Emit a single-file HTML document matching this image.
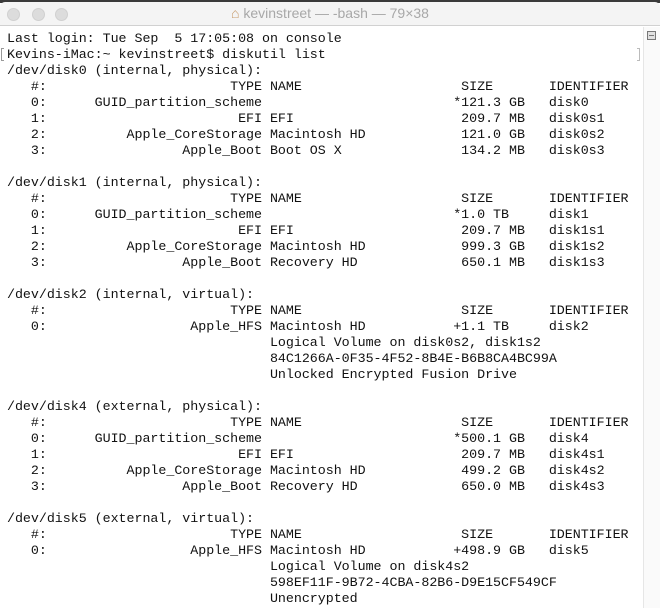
<!DOCTYPE html>
<html><head><meta charset="utf-8"><style>
html,body{margin:0;padding:0;}
body{width:660px;height:608px;overflow:hidden;background:#fff;position:relative;}
.top{position:absolute;left:0;top:0;width:660px;height:3px;background:#3a3a3a;}
.bar{position:absolute;left:0;top:2px;width:660px;height:23px;background:#f4f4f4;border-bottom:1px solid #d1d1d1;border-radius:5px 5px 0 0;}
.dot{position:absolute;top:6px;width:13px;height:13px;border-radius:50%;background:#dcdcdc;border:0.5px solid #d0d0d0;box-sizing:border-box;}
.title{position:absolute;left:0;width:660px;top:3px;text-align:center;font:14px "Liberation Sans",sans-serif;color:#a8a8a8;}
.sb{position:absolute;left:643px;top:27px;width:17px;height:581px;background:#fafafa;border-left:1px solid #e6e6e6;}
.sbi{position:absolute;left:647px;top:31px;width:9px;height:9px;border:1px solid #777;background:#e0e0e0;box-sizing:border-box;}
.sbi:before{content:"";position:absolute;left:1px;right:1px;top:3px;height:1px;background:#777;}
pre{position:absolute;left:7px;top:32px;margin:0;font:13.33px/16px "Liberation Mono",monospace;letter-spacing:-0.03px;color:#111;}
.mk{position:absolute;left:1px;top:48px;width:2px;height:11px;border:1px solid #999;border-right:none;}
.mk2{position:absolute;left:637px;top:48px;width:2px;height:11px;border:1px solid #bbb;border-left:none;}
</style></head><body>
<div class="top"></div>
<div class="bar">
<div class="dot" style="left:7px"></div>
<div class="dot" style="left:32px"></div>
<div class="dot" style="left:55px"></div>
<div class="title"><span style="color:#c79b6b">&#x2302;</span> kevinstreet — -bash — 79×38</div>
</div>
<div class="sb"></div><div class="sbi"></div>
<div class="mk"></div><div class="mk2"></div>
<pre>Last login: Tue Sep  5 17:05:08 on console
Kevins-iMac:~ kevinstreet$ diskutil list
/dev/disk0 (internal, physical):
   #:                       TYPE NAME                    SIZE       IDENTIFIER
   0:      GUID_partition_scheme                        *121.3 GB   disk0
   1:                        EFI EFI                     209.7 MB   disk0s1
   2:          Apple_CoreStorage Macintosh HD            121.0 GB   disk0s2
   3:                 Apple_Boot Boot OS X               134.2 MB   disk0s3

/dev/disk1 (internal, physical):
   #:                       TYPE NAME                    SIZE       IDENTIFIER
   0:      GUID_partition_scheme                        *1.0 TB     disk1
   1:                        EFI EFI                     209.7 MB   disk1s1
   2:          Apple_CoreStorage Macintosh HD            999.3 GB   disk1s2
   3:                 Apple_Boot Recovery HD             650.1 MB   disk1s3

/dev/disk2 (internal, virtual):
   #:                       TYPE NAME                    SIZE       IDENTIFIER
   0:                  Apple_HFS Macintosh HD           +1.1 TB     disk2
                                 Logical Volume on disk0s2, disk1s2
                                 84C1266A-0F35-4F52-8B4E-B6B8CA4BC99A
                                 Unlocked Encrypted Fusion Drive

/dev/disk4 (external, physical):
   #:                       TYPE NAME                    SIZE       IDENTIFIER
   0:      GUID_partition_scheme                        *500.1 GB   disk4
   1:                        EFI EFI                     209.7 MB   disk4s1
   2:          Apple_CoreStorage Macintosh HD            499.2 GB   disk4s2
   3:                 Apple_Boot Recovery HD             650.0 MB   disk4s3

/dev/disk5 (external, virtual):
   #:                       TYPE NAME                    SIZE       IDENTIFIER
   0:                  Apple_HFS Macintosh HD           +498.9 GB   disk5
                                 Logical Volume on disk4s2
                                 598EF11F-9B72-4CBA-82B6-D9E15CF549CF
                                 Unencrypted</pre>
</body></html>
